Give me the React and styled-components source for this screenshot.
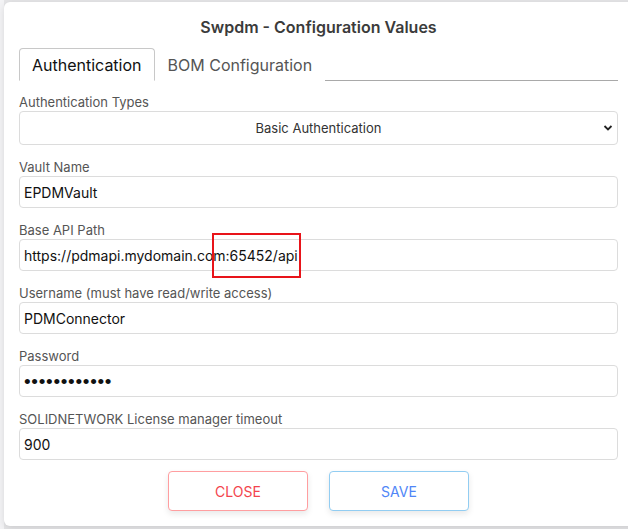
import React from 'react';
import styled, { createGlobalStyle } from 'styled-components';

const GlobalStyle = createGlobalStyle`
  html, body {
    margin: 0;
    padding: 0;
    width: 628px;
    height: 529px;
    overflow: hidden;
    background: #e6e6e8;
    font-family: Inter, "Noto Sans", "Liberation Sans", sans-serif;
  }
`;

const Backdrop = styled.div`
  width: 628px;
  height: 529px;
  overflow: hidden;
  background:
    linear-gradient(to right, #f4f4f6 0, #f4f4f6 4px, transparent 4px),
    #e6e6e8;
  padding: 2px 0 0 4px;
  box-sizing: border-box;
`;

const Modal = styled.div`
  width: 640px;
  box-sizing: border-box;
  background: #fff;
  border-radius: 6px;
  padding: 13px 26px 15px 15px;
  box-shadow: 0 2px 8px rgba(0, 0, 0, 0.12);
`;

const Title = styled.h2`
  margin: 0;
  height: 24px;
  line-height: 24px;
  text-align: center;
  font-size: 16px;
  font-weight: 600;
  color: #3b3b3b;
`;

const Tabs = styled.div`
  display: flex;
  margin-top: 9px;
  border-bottom: 1px solid #a9a9a9;
  height: 32px;
`;

const Tab = styled.div`
  box-sizing: border-box;
  height: 33px;
  padding: 0 12px;
  display: flex;
  align-items: center;
  font-size: 16px;
  color: ${p => (p.active ? '#111' : '#555')};
  background: #fff;
  border: 1px solid ${p => (p.active ? '#c8c8c8' : 'transparent')};
  border-bottom-color: ${p => (p.active ? '#fff' : 'transparent')};
  border-radius: 4px 4px 0 0;
`;

const Form = styled.div`
  display: flex;
  flex-direction: column;
  padding-top: 13px;
`;

const Field = styled.div`
  display: flex;
  flex-direction: column;
  margin-bottom: 14px;
  position: relative;
`;

const Label = styled.label`
  font-size: 13px;
  line-height: 16px;
  color: #555;
  margin-bottom: 1px;
`;

const Input = styled.div`
  box-sizing: border-box;
  height: ${p => (p.tall ? 34 : 32)}px;
  border: 1px solid #dcdcdc;
  border-radius: 4px;
  display: flex;
  align-items: center;
  padding: 0 4px;
  font-size: 14px;
  color: #111;
  white-space: nowrap;
`;

const SelectBox = styled(Input)`
  position: relative;
  justify-content: center;
  font-size: 13px;
  color: #333;
`;

const Chevron = styled.svg`
  position: absolute;
  right: 4px;
  top: 12px;
`;

const Dots = styled.span`
  font-family: "Liberation Sans", sans-serif;
  font-size: 19px;
  letter-spacing: 0.7px;
  color: #111;
  line-height: 1;
`;

const Highlight = styled.div`
  position: absolute;
  left: 193px;
  top: 11px;
  width: 89px;
  height: 45px;
  border: 2px solid #e8141a;
  box-sizing: border-box;
  pointer-events: none;
`;

const Actions = styled.div`
  display: flex;
  justify-content: center;
  gap: 21px;
  margin-top: -3px;
`;

const Button = styled.button`
  width: 140px;
  height: 40px;
  background: #fff;
  border: 1px solid ${p => (p.tone === 'danger' ? '#ff9ea0' : '#92cdf2')};
  color: ${p => (p.tone === 'danger' ? '#f3444d' : '#4f86f7')};
  border-radius: 4px;
  font-family: Inter, "Liberation Sans", sans-serif;
  font-size: 14px;
  box-shadow: 0 3px 6px rgba(0, 0, 0, 0.09);
  cursor: pointer;
`;

const fields = [
  { label: 'Vault Name', value: 'EPDMVault' },
  { label: 'Base API Path', value: 'https://pdmapi.mydomain.com:65452/api', mark: true },
  { label: 'Username (must have read/write access)', value: 'PDMConnector' },
  { label: 'Password', password: true },
  { label: 'SOLIDNETWORK License manager timeout', value: '900' },
];

export default function App() {
  return (
    <Backdrop>
      <GlobalStyle />
      <Modal>
        <Title>Swpdm - Configuration Values</Title>
        <Tabs>
          <Tab active>Authentication</Tab>
          <Tab>BOM Configuration</Tab>
        </Tabs>
        <Form>
          <Field>
            <Label>Authentication Types</Label>
            <SelectBox tall>
              Basic Authentication
              <Chevron width="10" height="8" viewBox="0 0 10 8">
                <path d="M1.5 2 L5 5.5 L8.5 2" fill="none" stroke="#222" strokeWidth="1.8" />
              </Chevron>
            </SelectBox>
          </Field>
          {fields.map(f => (
            <Field key={f.label}>
              <Label>{f.label}</Label>
              <Input>
                {f.password ? <Dots>{'•'.repeat(12)}</Dots> : f.value}
              </Input>
              {f.mark && <Highlight />}
            </Field>
          ))}
        </Form>
        <Actions>
          <Button tone="danger">CLOSE</Button>
          <Button tone="primary">SAVE</Button>
        </Actions>
      </Modal>
    </Backdrop>
  );
}
